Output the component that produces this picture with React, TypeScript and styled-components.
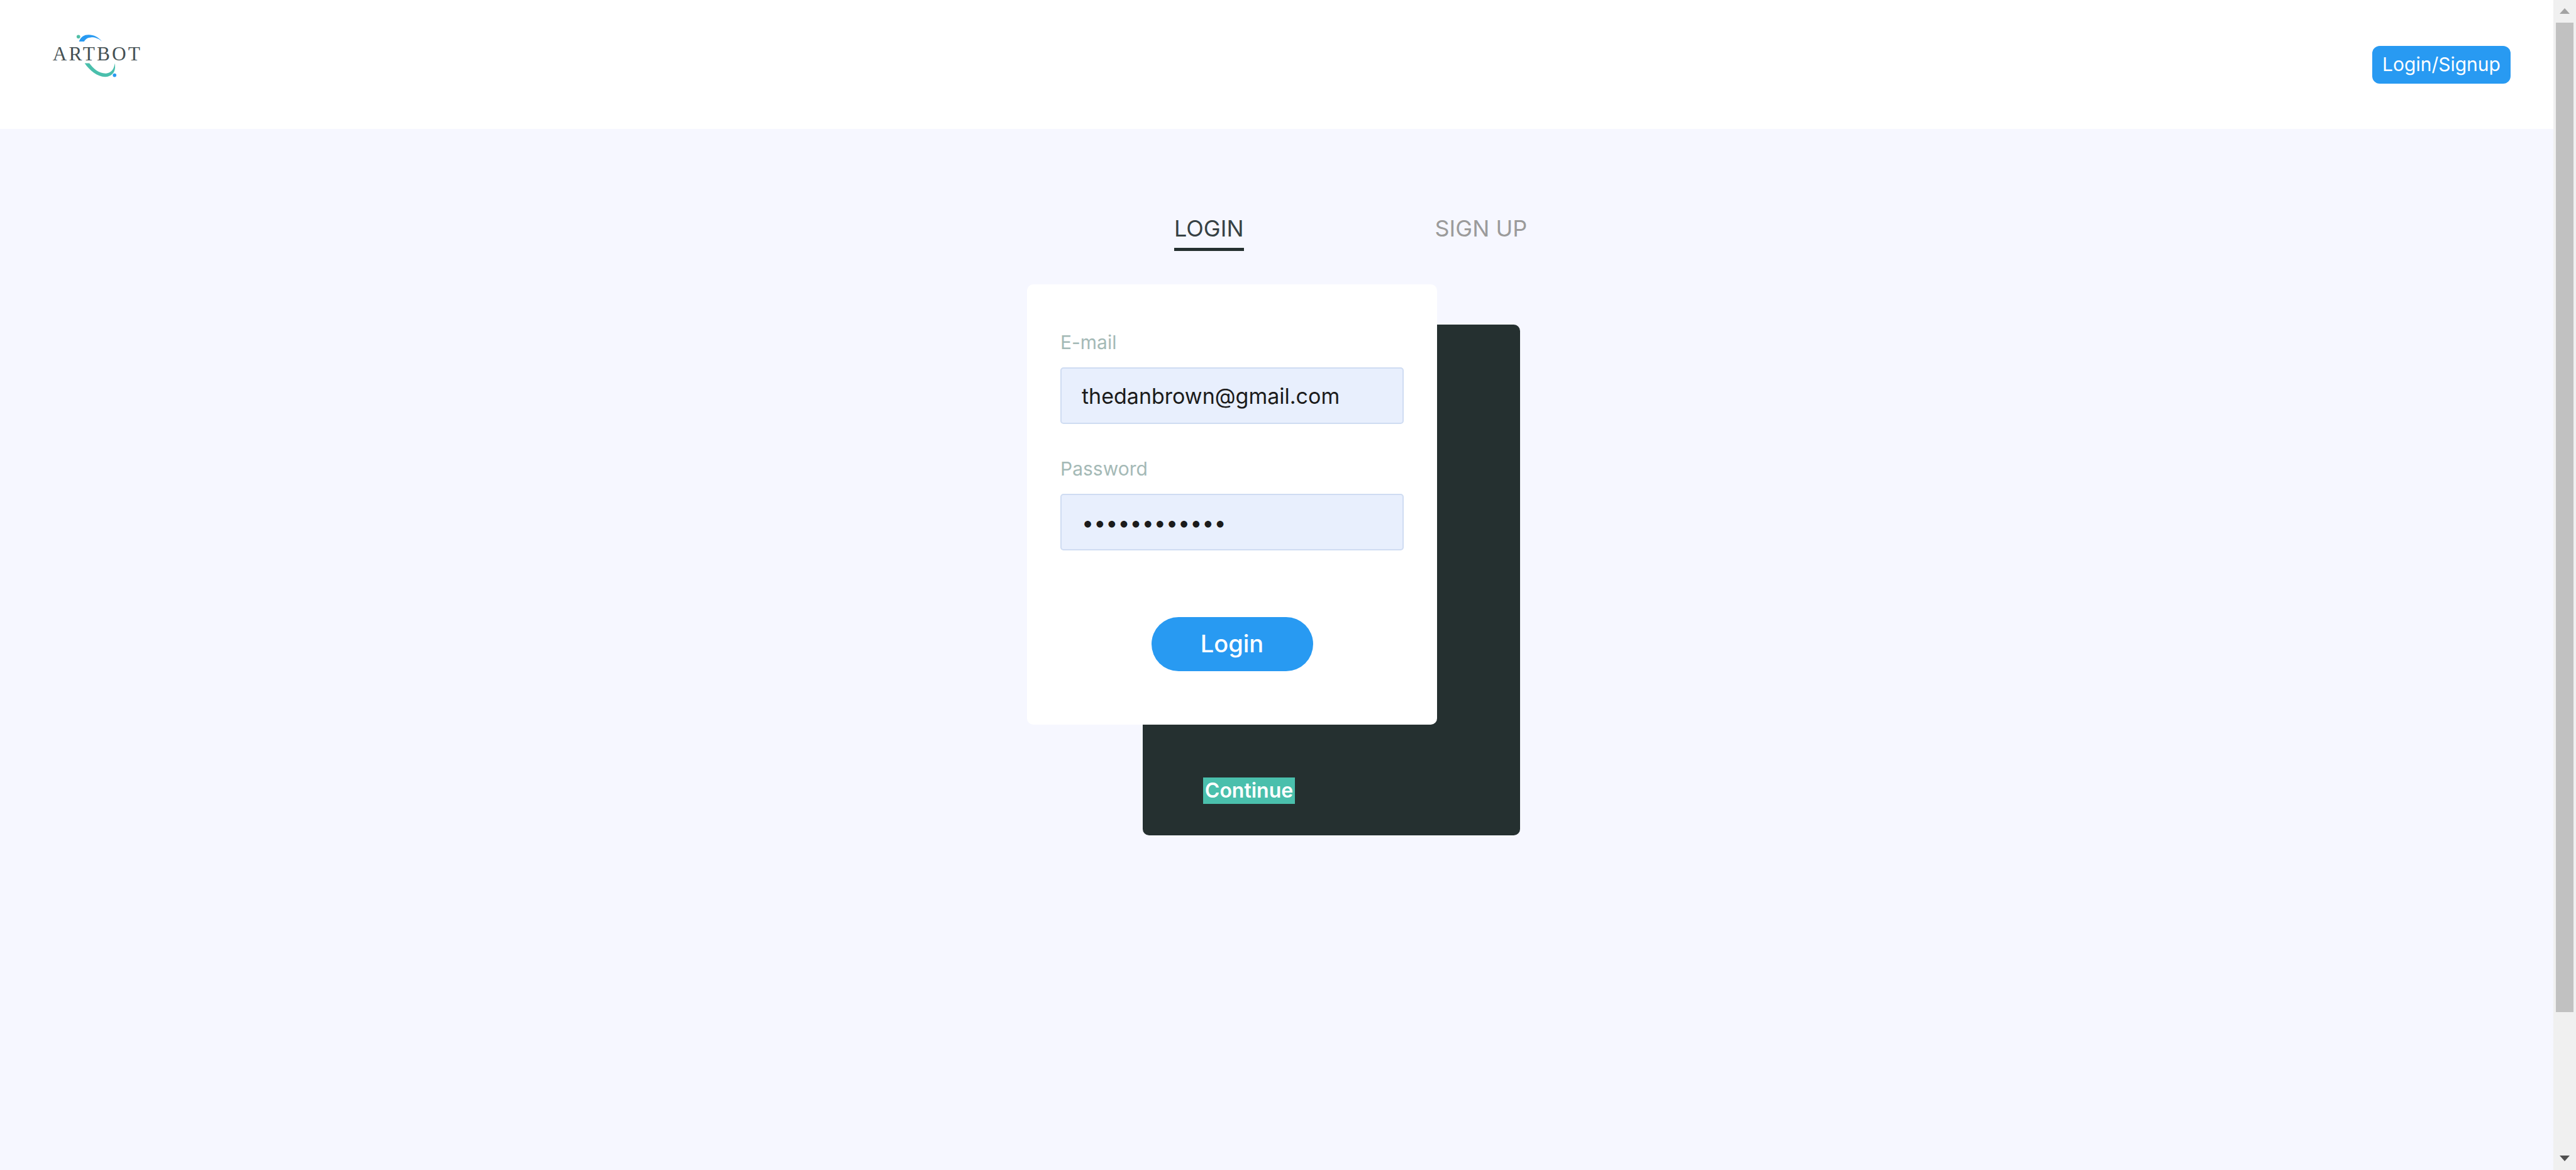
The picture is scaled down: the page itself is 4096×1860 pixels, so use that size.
import React, { useState } from "react";
import styled, { createGlobalStyle } from "styled-components";

const GlobalStyle = createGlobalStyle`
  *, *::before, *::after { box-sizing: border-box; }
  html, body { margin: 0; padding: 0; background: #f6f7ff; }
  body, button, input { font-family: Inter, "Liberation Sans", sans-serif; }
`;

const Shell = styled.div`
  display: flex;
  height: 100vh;
  overflow: hidden;
`;

const Page = styled.div`
  flex: 1;
  min-width: 0;
  background: #f6f7ff;
`;

const Header = styled.header`
  display: flex;
  align-items: center;
  justify-content: space-between;
  height: 205px;
  padding: 0 68px 0 64px;
  background: #fff;
`;

const HomeLink = styled.a`
  display: block;
  align-self: flex-start;
  padding-top: 32px;
`;

const LogoArt = styled.svg`
  display: block;
  width: 181px;
  height: 107px;
`;

const HeaderButton = styled.button`
  width: 220px;
  height: 60px;
  padding: 0 0 2px;
  border: 0;
  border-radius: 12px;
  background: #289af2;
  color: #fff;
  font-size: 30px;
  font-weight: 400;
  line-height: 36px;
`;

const Main = styled.main`
  display: flex;
  flex-direction: column;
  align-items: center;
`;

const Auth = styled.div`
  width: 794px;
`;

const Tabs = styled.div`
  display: flex;
  gap: 304px;
  height: 247px;
  padding-top: 136px;
  padding-left: 234px;
`;

const Tab = styled.button<{ $active?: boolean }>`
  height: 58px;
  padding: 0 0 9px;
  border: 0;
  border-bottom: 5px solid ${(p) => (p.$active ? "#253030" : "transparent")};
  background: none;
  color: ${(p) => (p.$active ? "#364144" : "#9b9b9b")};
  font-size: 36px;
  font-weight: 400;
  line-height: 44px;
  white-space: nowrap;
`;

const Stack = styled.div`
  display: grid;
  grid-template-columns: 184px 468px 132px;
  grid-template-rows: 64px 636px 176px;
`;

const BackPanel = styled.div`
  grid-area: 2 / 2 / 4 / 4;
  display: flex;
  align-items: flex-end;
  padding: 0 96px 50px;
  border-radius: 10px;
  background: #253030;
`;

const ContinueButton = styled.button`
  width: 146px;
  height: 42px;
  padding: 0;
  border: 0;
  background: #4abfac;
  color: #fff;
  font-size: 32px;
  font-weight: 600;
  line-height: 42px;
`;

const Card = styled.form`
  grid-area: 1 / 1 / 3 / 3;
  z-index: 1;
  display: flex;
  flex-direction: column;
  padding: 72px 53px 0;
  border-radius: 10px;
  background: #fff;
`;

const Field = styled.div`
  display: flex;
  flex-direction: column;
  gap: 20px;
  margin-bottom: 51px;
`;

const Label = styled.label`
  color: #a4b9b6;
  font-size: 30px;
  line-height: 40px;
`;

const Input = styled.input`
  width: 100%;
  height: 90px;
  padding: 0 32px;
  border: 2px solid #cfdcf2;
  border-radius: 5px;
  outline: 0;
  background: #e8effd;
  color: #1b1b1b;
  font-size: 34px;
`;

const LoginButton = styled.button`
  align-self: center;
  width: 257px;
  height: 86px;
  margin-top: 55px;
  padding: 0 0 2px;
  border: 0;
  border-radius: 43px;
  background: #289af2;
  color: #fff;
  font-size: 38px;
  font-weight: 500;
`;

const Scrollbar = styled.div`
  display: flex;
  flex-direction: column;
  align-items: center;
  width: 36px;
  background: #f0f0f0;
`;

const ArrowBox = styled.div`
  display: flex;
  align-items: center;
  justify-content: center;
  width: 28px;
  height: 36px;
`;

const Track = styled.div`
  flex: 1;
  width: 28px;
`;

const Thumb = styled.div`
  height: 88%;
  background: #c1c1c1;
`;

const Arrow = ({ down }: { down?: boolean }) => (
  <svg width="16" height="10" viewBox="0 0 16 10" aria-hidden="true">
    <path d={down ? "M0 0H16L8 9Z" : "M0 9H16L8 0Z"} fill={down ? "#505050" : "#a3a3a3"} />
  </svg>
);

const Logo = () => (
  <LogoArt viewBox="0 0 1020 600" role="img" aria-label="Artbot">
    <circle cx="342" cy="147" r="16" fill="#52bfa6" />
    <path d="M347 190C365 148 392 130 433 130C482 130 520 152 552 188C516 160 484 151 455 153C425 155 408 165 393 190Z" fill="#289af2" />
    <text x="112" y="357" fontFamily="'Liberation Serif', serif" fontSize="176" letterSpacing="18" fill="#465154">
      ARTBOT
    </text>
    <path d="M398 385H440C475 432 525 478 590 476C645 472 664 425 667 385C683 452 649 506 582 507C510 507 441 448 398 385Z" fill="#4abfac" />
    <circle cx="666" cy="492" r="16" fill="#289af2" />
  </LogoArt>
);

export default function App() {
  const [email, setEmail] = useState("thedanbrown@gmail.com");
  const [password, setPassword] = useState("inferno-2013");

  return (
    <>
      <GlobalStyle />
      <Shell>
        <Page>
          <Header>
            <HomeLink href="#">
              <Logo />
            </HomeLink>
            <HeaderButton type="button">Login/Signup</HeaderButton>
          </Header>
          <Main>
            <Auth>
              <Tabs>
                <Tab type="button" $active>LOGIN</Tab>
                <Tab type="button">SIGN UP</Tab>
              </Tabs>
              <Stack>
                <Card onSubmit={(e) => e.preventDefault()}>
                  <Field>
                    <Label htmlFor="email">E-mail</Label>
                    <Input id="email" type="email" value={email} onChange={(e) => setEmail(e.target.value)} />
                  </Field>
                  <Field>
                    <Label htmlFor="password">Password</Label>
                    <Input id="password" type="password" value={password} onChange={(e) => setPassword(e.target.value)} />
                  </Field>
                  <LoginButton type="submit">Login</LoginButton>
                </Card>
                <BackPanel>
                  <ContinueButton type="button">Continue</ContinueButton>
                </BackPanel>
              </Stack>
            </Auth>
          </Main>
        </Page>
        <Scrollbar aria-hidden="true">
          <ArrowBox>
            <Arrow />
          </ArrowBox>
          <Track>
            <Thumb />
          </Track>
          <ArrowBox>
            <Arrow down />
          </ArrowBox>
        </Scrollbar>
      </Shell>
    </>
  );
}
